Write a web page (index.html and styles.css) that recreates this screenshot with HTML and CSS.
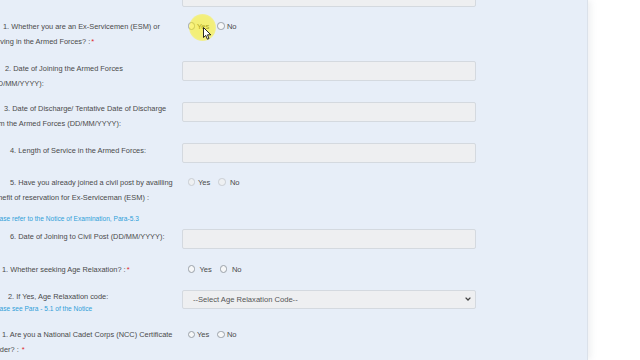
FILE: index.html
```html
<!DOCTYPE html>
<html>
<head>
<meta charset="utf-8">
<link rel="stylesheet" href="styles.css">
</head>
<body>
<div class="panel">
  <div class="form">
    <div class="row gap115">
      <div class="label"></div>
      <div class="field"><div class="input top-input">ESM</div></div>
    </div>

    <div class="row">
      <div class="label in13">1. Whether you are an Ex-Servicemen (ESM) or serving in the Armed Forces? :<span class="req">*</span></div>
      <div class="field radios">
        <label class="opt"><span class="radio"></span><span class="t1">Yes</span></label>
        <label class="opt"><span class="radio"></span><span class="t1">No</span></label>
      </div>
    </div>

    <div class="row gap10">
      <div class="label in15">2. Date of Joining the Armed Forces (DD/MM/YYYY):</div>
      <div class="field"><div class="input"></div></div>
    </div>

    <div class="row">
      <div class="label in14">3. Date of Discharge/ Tentative Date of Discharge from the Armed Forces (DD/MM/YYYY):</div>
      <div class="field"><div class="input shift"></div></div>
    </div>

    <div class="row">
      <div class="label in20">4. Length of Service in the Armed Forces:</div>
      <div class="field"><div class="input"></div></div>
    </div>

    <div class="row gap45">
      <div class="label in20">5. Have you already joined a civil post by availling benefit of reservation for Ex-Serviceman (ESM) :
        <span class="link link-wide">Please refer to the Notice of Examination, Para-5.3</span>
      </div>
      <div class="field radios">
        <label class="opt dis"><span class="radio"></span><span class="t2">Yes</span></label>
        <label class="opt dis"><span class="radio"></span><span class="t2">No</span></label>
      </div>
    </div>

    <div class="row gap13">
      <div class="label in20">6. Date of Joining to Civil Post (DD/MM/YYYY):</div>
      <div class="field"><div class="input"></div></div>
    </div>

    <div class="row">
      <div class="label in12">1. Whether seeking Age Relaxation? :<span class="req">*</span></div>
      <div class="field radios">
        <label class="opt"><span class="radio"></span><span class="t3">Yes</span></label>
        <label class="opt"><span class="radio"></span><span class="t3">No</span></label>
      </div>
    </div>

    <div class="row gap135">
      <div class="label in18">2. If Yes, Age Relaxation code:
        <span class="link">Please see Para - 5.1 of the Notice</span>
      </div>
      <div class="field">
        <div class="select">
          <span>--Select Age Relaxation Code--</span>
          <svg class="chev" width="6" height="4" viewBox="0 0 6 4"><path d="M0.6 0.6 L3 3 L5.4 0.6" fill="none" stroke="#444" stroke-width="1.3"/></svg>
        </div>
      </div>
    </div>

    <div class="row">
      <div class="label in12">1. Are you a National Cadet Corps (NCC) Certificate holder? : <span class="req">*</span></div>
      <div class="field radios">
        <label class="opt"><span class="radio"></span><span class="t1">Yes</span></label>
        <label class="opt"><span class="radio"></span><span class="t1">No</span></label>
      </div>
    </div>
  </div>

  <div class="highlight"></div>
  <svg class="cursor" width="9" height="13" viewBox="0 0 9 13">
    <path d="M0.5 0.5 L0.5 10.5 L2.8 8.4 L4.4 12.2 L6 11.5 L4.5 7.8 L7.8 7.8 Z" fill="#fff" stroke="#111" stroke-width="0.9" stroke-linejoin="round"/>
  </svg>
</div>
</body>
</html>
```

FILE: styles.css
```css
html, body {
  margin: 0;
  padding: 0;
  background: #ffffff;
}

body {
  width: 640px;
  height: 360px;
  overflow: hidden;
  font-family: "Liberation Sans", Arial, sans-serif;
}

.panel {
  position: relative;
  width: 587px;
  height: 360px;
  background: #e7eef8;
  border-right: 1px solid #dbe1ea;
  box-shadow: 3px 0 6px rgba(120, 130, 150, 0.12);
  overflow: hidden;
}

.form {
  margin: -13px 0 0 -10px;
}

.row {
  display: grid;
  grid-template-columns: 187px 294px;
  column-gap: 5px;
  align-items: start;
  margin-bottom: 12px;
}

.gap10 { margin-bottom: 10px; }
.gap115 { margin-bottom: 11.5px; }
.gap13 { margin-bottom: 13px; }
.gap135 { margin-bottom: 13.5px; }
.gap45 { margin-bottom: 4.5px; }

.label {
  font-size: 7.4px;
  line-height: 15px;
  color: #4a4a4a;
}

.in12 { text-indent: 12px; }
.in13 { text-indent: 13px; }
.in14 { text-indent: 14px; }
.in15 { text-indent: 15px; }
.in18 { text-indent: 18px; }
.in20 { text-indent: 20px; }

.req {
  color: #e02424;
  margin-left: 1px;
}

.link {
  display: block;
  text-indent: 0;
  font-size: 6.6px;
  line-height: 10px;
  color: #2f9fd9;
}

.link-wide {
  margin-top: 9.5px;
}

.input {
  box-sizing: border-box;
  height: 20px;
  background: #eeeff1;
  border: 1px solid #d4d9df;
  border-radius: 2px;
  font-size: 7.6px;
  color: #555;
}

.input.shift {
  margin-top: 1.5px;
}

.top-input {
  padding: 6px 0 0 9px;
  line-height: 8px;
}

.radios {
  display: flex;
  align-items: center;
  height: 15px;
  font-size: 7.6px;
  color: #4a4a4a;
}

.opt {
  display: flex;
  align-items: center;
}

.radio {
  box-sizing: border-box;
  width: 7.5px;
  height: 7.5px;
  border: 1px solid #9ba1a9;
  border-radius: 50%;
  background: #f6f7f8;
  margin-left: 5.5px;
}

.opt + .opt .radio {
  margin-left: 8px;
}

.dis .radio {
  border-color: #c9cdd3;
  background: #eef0f2;
}

.t1 { margin-left: 2px; }
.t2 { margin-left: 3px; }
.dis + .dis .t2 { margin-left: 4px; }
.t3 { margin-left: 4.5px; }

.select {
  box-sizing: border-box;
  height: 18.5px;
  margin-top: 1.5px;
  display: flex;
  align-items: center;
  justify-content: space-between;
  padding: 0 4px 0 10px;
  background: #eeeff1;
  border: 1px solid #d4d9df;
  border-radius: 2px;
  font-size: 7.6px;
  color: #555;
}

.chev {
  display: block;
}

.highlight {
  position: absolute;
  left: 189px;
  top: 14px;
  width: 27px;
  height: 27px;
  border-radius: 50%;
  background: radial-gradient(circle, rgba(255, 240, 0, 0.55) 0%, rgba(255, 240, 0, 0.5) 62%, rgba(255, 240, 0, 0) 100%);
}

.cursor {
  position: absolute;
  left: 202.5px;
  top: 26.5px;
}
```
